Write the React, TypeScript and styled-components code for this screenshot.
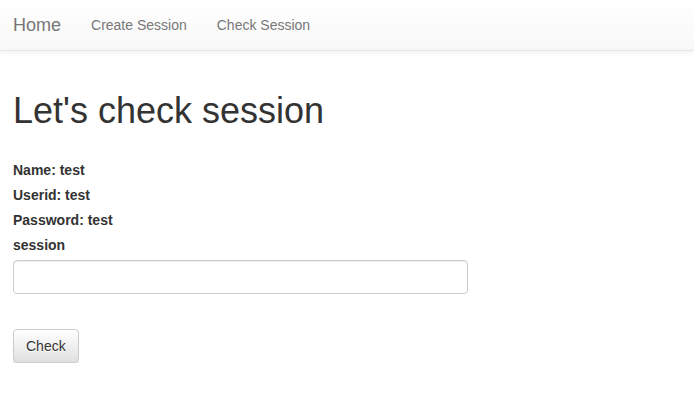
import React from "react";
import styled, { createGlobalStyle } from "styled-components";

const Global = createGlobalStyle`
  html, body { margin: 0; padding: 0; background: #fff; }
  body {
    font-family: "Liberation Sans", Arial, Helvetica, sans-serif;
    font-size: 14px;
    line-height: 1.42857143;
    color: #333;
  }
  * { box-sizing: border-box; }
`;

const Navbar = styled.nav`
  height: 51px;
  display: flex;
  align-items: stretch;
  padding: 0 13px;
  background-image: linear-gradient(to bottom, #fff 0, #f8f8f8 100%);
  border-bottom: 1px solid #e7e7e7;
  box-shadow: inset 0 1px 0 rgba(255,255,255,.15), 0 1px 5px rgba(0,0,0,.075);
`;

const Brand = styled.a`
  font-size: 18px;
  line-height: 20px;
  color: #777;
  text-decoration: none;
  padding: 15px 15px 15px 0;
  display: flex;
  align-items: center;
`;

const NavLink = styled.a`
  font-size: 14px;
  line-height: 20px;
  color: #777;
  text-decoration: none;
  padding: 15px;
  display: flex;
  align-items: center;
`;

const Main = styled.main`
  padding: 20px 13px 0;
`;

const Title = styled.h1`
  font-size: 36px;
  font-weight: 500;
  line-height: 1.1;
  margin: 20px 0 0;
  color: #333;
`;

const Info = styled.div`
  display: flex;
  flex-direction: column;
  align-items: flex-start;
  margin-top: 29px;
`;

const Label = styled.label`
  display: inline-block;
  font-weight: 700;
  margin-bottom: 5px;
  line-height: 20px;
`;

const Input = styled.input`
  display: block;
  width: 455px;
  height: 34px;
  padding: 6px 12px;
  font-size: 14px;
  font-family: inherit;
  color: #555;
  background: #fff;
  border: 1px solid #ccc;
  border-radius: 4px;
  box-shadow: inset 0 1px 1px rgba(0,0,0,.075);
  margin-bottom: 35px;
`;

const Button = styled.button`
  height: 34px;
  padding: 6px 12px;
  font-size: 14px;
  line-height: 20px;
  font-family: inherit;
  color: #333;
  border: 1px solid #ccc;
  border-radius: 4px;
  background-image: linear-gradient(to bottom, #fff 0, #e0e0e0 100%);
  text-shadow: 0 1px 0 #fff;
  box-shadow: inset 0 1px 0 rgba(255,255,255,.15), 0 1px 1px rgba(0,0,0,.075);
  cursor: pointer;
`;

export default function App() {
  return (
    <>
      <Global />
      <Navbar>
        <Brand href="#">Home</Brand>
        <NavLink href="#">Create Session</NavLink>
        <NavLink href="#">Check Session</NavLink>
      </Navbar>
      <Main>
        <Title>Let's check session</Title>
        <Info>
          <Label>Name: test</Label>
          <Label>Userid: test</Label>
          <Label>Password: test</Label>
          <Label>session</Label>
        </Info>
        <Input type="text" />
        <Button>Check</Button>
      </Main>
    </>
  );
}
